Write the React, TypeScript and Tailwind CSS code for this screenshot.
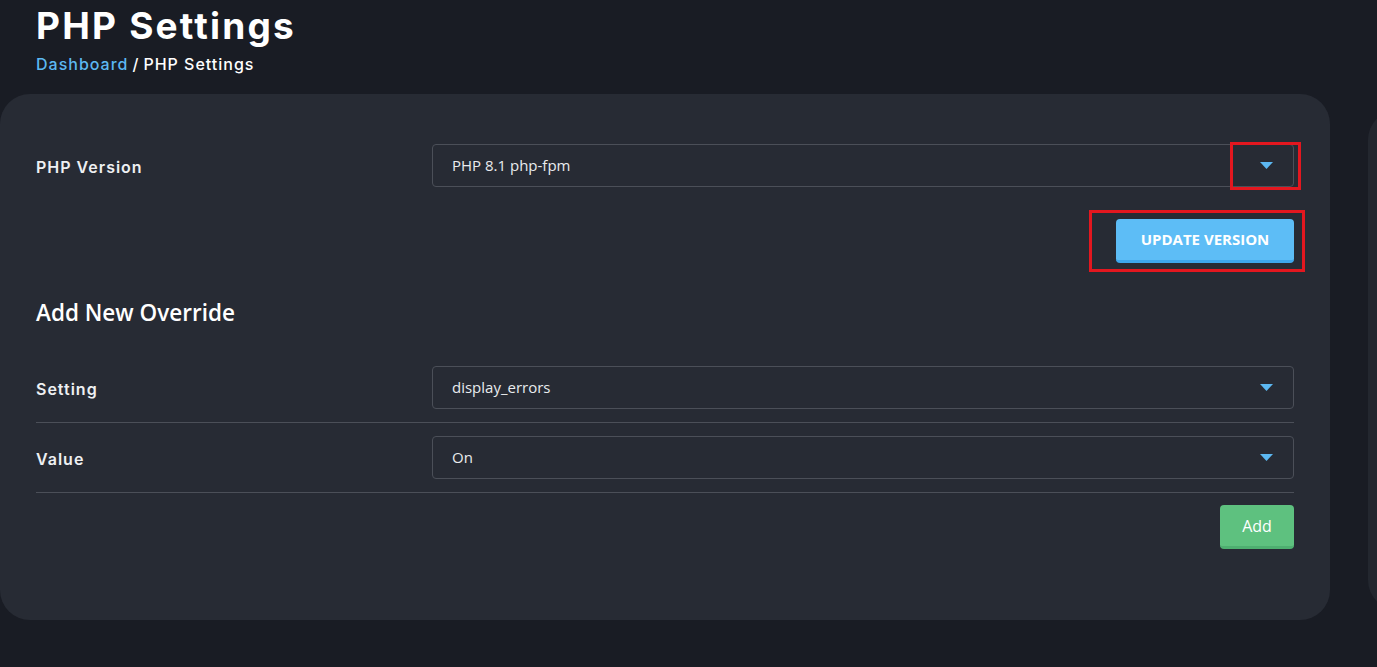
import React from 'react';

const Caret: React.FC = () => (
  <svg width="13" height="7" viewBox="0 0 13 7" className="shrink-0">
    <path d="M0 0 H13 L6.5 7 Z" fill="#5cb8f2" />
  </svg>
);

const Select: React.FC<{ value: string; children?: React.ReactNode }> = ({ value, children }) => (
  <div className="relative flex h-[43px] w-[862px] items-center justify-between rounded-[4px] border border-[#4b4f58] pl-[19px] pr-[20px] text-[15px] text-[#e9ebee] font-['Open_Sans',sans-serif]">
    <span>{value}</span>
    <Caret />
    {children}
  </div>
);

const App: React.FC = () => {
  return (
    <div className="h-[667px] w-full overflow-hidden bg-[#191c24] font-['Inter',sans-serif]">
      {/* Page header */}
      <div className="pl-[36px] pt-[3px]">
        <h1 className="text-[37px] font-bold leading-[46px] tracking-[2.2px] text-white">PHP Settings</h1>
        <div className="mt-[5px] flex items-center gap-[4px] text-[16px] font-medium leading-[20px] tracking-[1px]">
          <span className="text-[#5cb8f2]">Dashboard</span>
          <span className="text-white">/</span>
          <span className="text-white">PHP Settings</span>
        </div>
      </div>

      <div className="mt-[20px] flex gap-[38px]">
        {/* Main card */}
        <div className="h-[526px] w-[1330px] shrink-0 rounded-[30px] bg-[#272b34] px-[36px] pt-[50px]">
          <div className="flex items-center">
            <div className="w-[396px] pt-[3px] text-[16px] font-semibold tracking-[1px] text-[#eef0f2]">PHP Version</div>
            <Select value="PHP 8.1 php-fpm">
              <div className="absolute -top-[3px] left-[797px] h-[48px] w-[71px] border-[3px] border-[#e3171f]" />
            </Select>
          </div>

          <div className="mt-[32px] flex justify-end">
            <div className="relative">
              <button className="h-[44px] w-[178px] rounded-[4px] border-b-[3px] border-[#3ea7ec] bg-[#5dbdf6] text-[15px] font-bold text-white font-['Open_Sans',sans-serif]">
                UPDATE VERSION
              </button>
              <div className="absolute -bottom-[9px] -left-[27px] -right-[11px] -top-[9px] border-[3px] border-[#e3171f]" />
            </div>
          </div>

          <h2 className="mt-[36px] text-[22.5px] font-semibold leading-[28px] text-white font-['Open_Sans',sans-serif]">Add New Override</h2>

          <div className="mt-[26px]">
            <div className="flex items-center border-b border-[#4b4f58] pb-[13px] pt-[13px]">
              <div className="w-[396px] pt-[2px] text-[16px] font-semibold tracking-[1px] text-[#eef0f2]">Setting</div>
              <Select value="display_errors" />
            </div>
            <div className="flex items-center border-b border-[#4b4f58] pb-[13px] pt-[13px]">
              <div className="w-[396px] pt-[2px] text-[16px] font-semibold tracking-[1px] text-[#eef0f2]">Value</div>
              <Select value="On" />
            </div>
          </div>

          <div className="mt-[12px] flex justify-end">
            <button className="h-[44px] w-[74px] rounded-[4px] border-b-[3px] border-[#4eaf70] bg-[#5ec17f] text-[16px] text-white font-['Open_Sans',sans-serif]">
              Add
            </button>
          </div>
        </div>

        {/* Side card (cut off) */}
        <div className="mt-[16px] h-[500px] w-[300px] shrink-0 rounded-[30px] bg-[#23272f]" />
      </div>
    </div>
  );
};

export default App;
